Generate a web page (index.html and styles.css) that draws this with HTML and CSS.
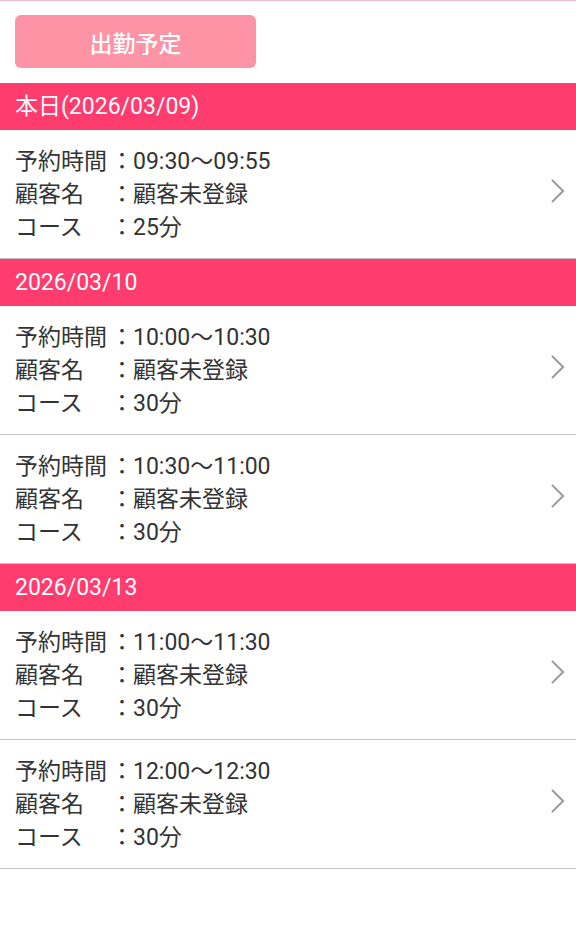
FILE: index.html
```html
<!DOCTYPE html>
<html lang="ja">
<head>
<meta charset="utf-8">
<link rel="stylesheet" href="styles.css">
</head>
<body>
<div class="topline"></div>
<div class="toolbar">
  <button class="btn">出勤予定</button>
</div>

<div class="date-head">本日(2026/03/09)</div>
<div class="item">
  <div class="rows">
    <div class="row"><span class="lbl">予約時間</span><span class="colon"><span>：</span></span><span>09:30〜09:55</span></div>
    <div class="row"><span class="lbl">顧客名</span><span class="colon"><span>：</span></span><span>顧客未登録</span></div>
    <div class="row"><span class="lbl">コース</span><span class="colon"><span>：</span></span><span>25分</span></div>
  </div>
  <svg class="chev" viewBox="0 0 16 28"><path d="M2 2 L14 14 L2 26" fill="none" stroke="#9a9a9a" stroke-width="2.2"/></svg>
</div>

<div class="date-head">2026/03/10</div>
<div class="item">
  <div class="rows">
    <div class="row"><span class="lbl">予約時間</span><span class="colon"><span>：</span></span><span>10:00〜10:30</span></div>
    <div class="row"><span class="lbl">顧客名</span><span class="colon"><span>：</span></span><span>顧客未登録</span></div>
    <div class="row"><span class="lbl">コース</span><span class="colon"><span>：</span></span><span>30分</span></div>
  </div>
  <svg class="chev" viewBox="0 0 16 28"><path d="M2 2 L14 14 L2 26" fill="none" stroke="#9a9a9a" stroke-width="2.2"/></svg>
</div>
<div class="item">
  <div class="rows">
    <div class="row"><span class="lbl">予約時間</span><span class="colon"><span>：</span></span><span>10:30〜11:00</span></div>
    <div class="row"><span class="lbl">顧客名</span><span class="colon"><span>：</span></span><span>顧客未登録</span></div>
    <div class="row"><span class="lbl">コース</span><span class="colon"><span>：</span></span><span>30分</span></div>
  </div>
  <svg class="chev" viewBox="0 0 16 28"><path d="M2 2 L14 14 L2 26" fill="none" stroke="#9a9a9a" stroke-width="2.2"/></svg>
</div>

<div class="date-head">2026/03/13</div>
<div class="item">
  <div class="rows">
    <div class="row"><span class="lbl">予約時間</span><span class="colon"><span>：</span></span><span>11:00〜11:30</span></div>
    <div class="row"><span class="lbl">顧客名</span><span class="colon"><span>：</span></span><span>顧客未登録</span></div>
    <div class="row"><span class="lbl">コース</span><span class="colon"><span>：</span></span><span>30分</span></div>
  </div>
  <svg class="chev" viewBox="0 0 16 28"><path d="M2 2 L14 14 L2 26" fill="none" stroke="#9a9a9a" stroke-width="2.2"/></svg>
</div>
<div class="item">
  <div class="rows">
    <div class="row"><span class="lbl">予約時間</span><span class="colon"><span>：</span></span><span>12:00〜12:30</span></div>
    <div class="row"><span class="lbl">顧客名</span><span class="colon"><span>：</span></span><span>顧客未登録</span></div>
    <div class="row"><span class="lbl">コース</span><span class="colon"><span>：</span></span><span>30分</span></div>
  </div>
  <svg class="chev" viewBox="0 0 16 28"><path d="M2 2 L14 14 L2 26" fill="none" stroke="#9a9a9a" stroke-width="2.2"/></svg>
</div>
</body>
</html>
```

FILE: styles.css
```css
* { box-sizing: border-box; }
html, body { margin: 0; padding: 0; background: #fff; }
body {
  font-family: Roboto, "Noto Sans CJK JP", sans-serif;
  color: #333;
  width: 576px;
}
.topline { height: 1px; background: #efbccb; }
.toolbar {
  padding: 14px 15px 14px;
  height: 82px;
}
.btn {
  display: block;
  width: 241px;
  height: 53px;
  border: none;
  border-radius: 6px;
  background: #ff93a6;
  color: #fff;
  font-family: Roboto, "Noto Sans CJK JP", sans-serif;
  font-size: 23px;
  font-weight: 500;
  padding: 0;
}
.date-head {
  height: 47px;
  background: #ff3c6e;
  color: #fff;
  font-size: 23px;
  line-height: 47px;
  padding-left: 15px;
}
.item {
  height: 129px;
  display: flex;
  align-items: center;
  justify-content: space-between;
  padding: 0 11px 0 15px;
  border-bottom: 1px solid #c4c4c4;
}
.rows { display: flex; flex-direction: column; }
.row {
  display: flex;
  font-size: 23px;
  line-height: 33px;
  height: 33px;
}
.lbl { width: 96px; flex: none; }
.colon { width: 22px; flex: none; display: flex; justify-content: center; }
.chev { width: 15px; height: 26px; margin-top: -6px; }
```
